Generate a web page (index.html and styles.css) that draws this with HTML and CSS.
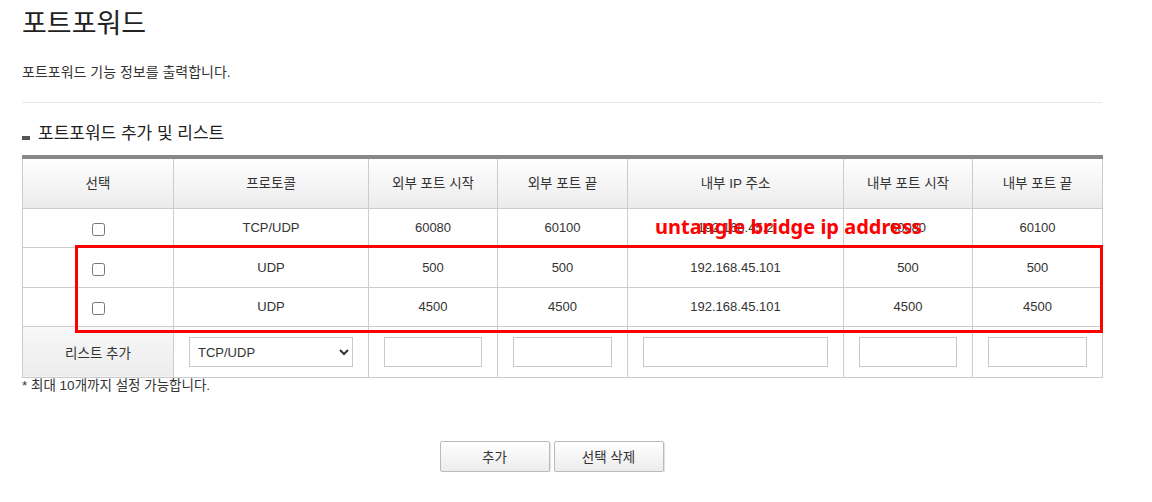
FILE: index.html
```html
<!DOCTYPE html>
<html lang="ko">
<head>
<meta charset="utf-8">
<title>포트포워드</title>
<link rel="stylesheet" href="styles.css">
</head>
<body>
<div class="page">
  <h1 class="title">포트포워드</h1>
  <p class="desc">포트포워드 기능 정보를 출력합니다.</p>
  <hr class="divider">
  <h2 class="section"><span class="bullet"></span>포트포워드 추가 및 리스트</h2>
  <div class="table-wrap">
    <table class="grid">
      <colgroup>
        <col class="c1"><col class="c2"><col class="c3"><col class="c4"><col class="c5"><col class="c6"><col class="c7">
      </colgroup>
      <thead>
        <tr>
          <th>선택</th><th>프로토콜</th><th>외부 포트 시작</th><th>외부 포트 끝</th><th>내부 IP 주소</th><th>내부 포트 시작</th><th>내부 포트 끝</th>
        </tr>
      </thead>
      <tbody>
        <tr class="r1">
          <td><input type="checkbox" class="chk"></td><td>TCP/UDP</td><td>60080</td><td>60100</td><td>192.168.45.2</td><td>60080</td><td>60100</td>
        </tr>
        <tr class="r2">
          <td><input type="checkbox" class="chk"></td><td>UDP</td><td>500</td><td>500</td><td>192.168.45.101</td><td>500</td><td>500</td>
        </tr>
        <tr class="r3">
          <td><input type="checkbox" class="chk"></td><td>UDP</td><td>4500</td><td>4500</td><td>192.168.45.101</td><td>4500</td><td>4500</td>
        </tr>
        <tr class="add-row">
          <th class="add-label">리스트 추가</th>
          <td class="field"><select class="sel"><option>TCP/UDP</option><option>TCP</option><option>UDP</option></select></td>
          <td class="field"><input type="text" class="txt"></td>
          <td class="field"><input type="text" class="txt"></td>
          <td class="field"><input type="text" class="txt"></td>
          <td class="field"><input type="text" class="txt"></td>
          <td class="field"><input type="text" class="txt"></td>
        </tr>
      </tbody>
    </table>
    <div class="highlight"></div>
    <div class="note-label">untangle bridge ip address</div>
  </div>
  <p class="foot">* 최대 <span class="num">10</span>개까지 설정 가능합니다.</p>
  <div class="actions">
    <button class="btn">추가</button>
    <button class="btn">선택 삭제</button>
  </div>
</div>
</body>
</html>
```

FILE: styles.css
```css
* { box-sizing: border-box; }
html, body { margin: 0; padding: 0; background: #fff; }
body {
  font-family: "Liberation Sans", "Noto Sans CJK KR", sans-serif;
  color: #333;
  font-size: 13px;
}
.page {
  width: 1102px;
  padding-left: 22px;
}
.title {
  margin: 0;
  padding-top: 9px;
  font-size: 27px;
  font-weight: normal;
  line-height: 30px;
  color: #222;
}
.desc {
  margin: 24px 0 0;
  font-size: 14px;
  line-height: 18px;
}
.divider {
  margin: 21px 0 0;
  border: 0;
  border-top: 1px solid #e8e8e8;
  height: 0;
}
.section {
  margin: 20px 0 0;
  font-size: 17px;
  font-weight: normal;
  line-height: 22px;
  display: flex;
  align-items: center;
  color: #222;
}
.bullet {
  display: inline-block;
  width: 8px;
  height: 4px;
  background: #555;
  margin-right: 8px;
  margin-top: 7px;
}
.table-wrap {
  position: relative;
  margin-top: 10px;
}
.grid {
  width: 1080px;
  border-collapse: collapse;
  table-layout: fixed;
  border-top: 4px solid #888;
}
.c1 { width: 151px; }
.c2 { width: 195px; }
.c3 { width: 129px; }
.c4 { width: 130px; }
.c5 { width: 216px; }
.c6 { width: 129px; }
.c7 { width: 130px; }
.grid th, .grid td {
  border: 1px solid #ccc;
  text-align: center;
  font-weight: normal;
  font-size: 13px;
  color: #333;
  padding: 0;
}
.grid thead th {
  height: 51px;
  font-size: 13.5px;
  background: linear-gradient(#ffffff, #ebebeb);
  padding-bottom: 2px;
}
.grid .r1 td { height: 39px; }
.grid .r2 td { height: 40px; }
.grid .r3 td { height: 39px; }
.chk {
  width: 13px;
  height: 13px;
  margin: 4px 0 0;
  vertical-align: middle;
}
.grid .add-row th, .grid .add-row td { height: 51px; }
.grid .add-label {
  font-size: 13.5px;
  background: linear-gradient(#f8f8f8, #ececec);
}
.grid .field { padding: 0 15px; }
.sel, .txt {
  width: 100%;
  height: 30px;
  border: 1px solid #c8c8c8;
  background: #fff;
  font-family: "Liberation Sans", "Noto Sans CJK KR", sans-serif;
  font-size: 13px;
  color: #333;
  border-radius: 0;
  margin-top: 1px;
}
.sel { padding-left: 4px; }
.highlight {
  position: absolute;
  left: 53px;
  top: 90px;
  width: 1028px;
  height: 88px;
  border: 3px solid #ff0000;
  pointer-events: none;
}
.note-label {
  position: absolute;
  left: 633px;
  top: 59px;
  font-family: "Noto Sans", "Liberation Sans", sans-serif;
  font-weight: bold;
  font-size: 20px;
  line-height: 26px;
  color: #ff0000;
  white-space: nowrap;
}
.foot {
  margin: 0;
  font-size: 13.5px;
  line-height: 16px;
}
.actions {
  display: flex;
  justify-content: center;
  gap: 4px;
  margin-top: 47px;
  width: 1080px;
  padding-right: 21px;
}
.btn {
  width: 110px;
  height: 31px;
  border: 1px solid #bbb;
  border-radius: 2px;
  background: linear-gradient(#ffffff, #ececec);
  box-shadow: 1px 1px 1px rgba(0,0,0,0.12);
  font-family: "Liberation Sans", "Noto Sans CJK KR", sans-serif;
  font-size: 13.5px;
  color: #333;
  padding: 0;
}
```
